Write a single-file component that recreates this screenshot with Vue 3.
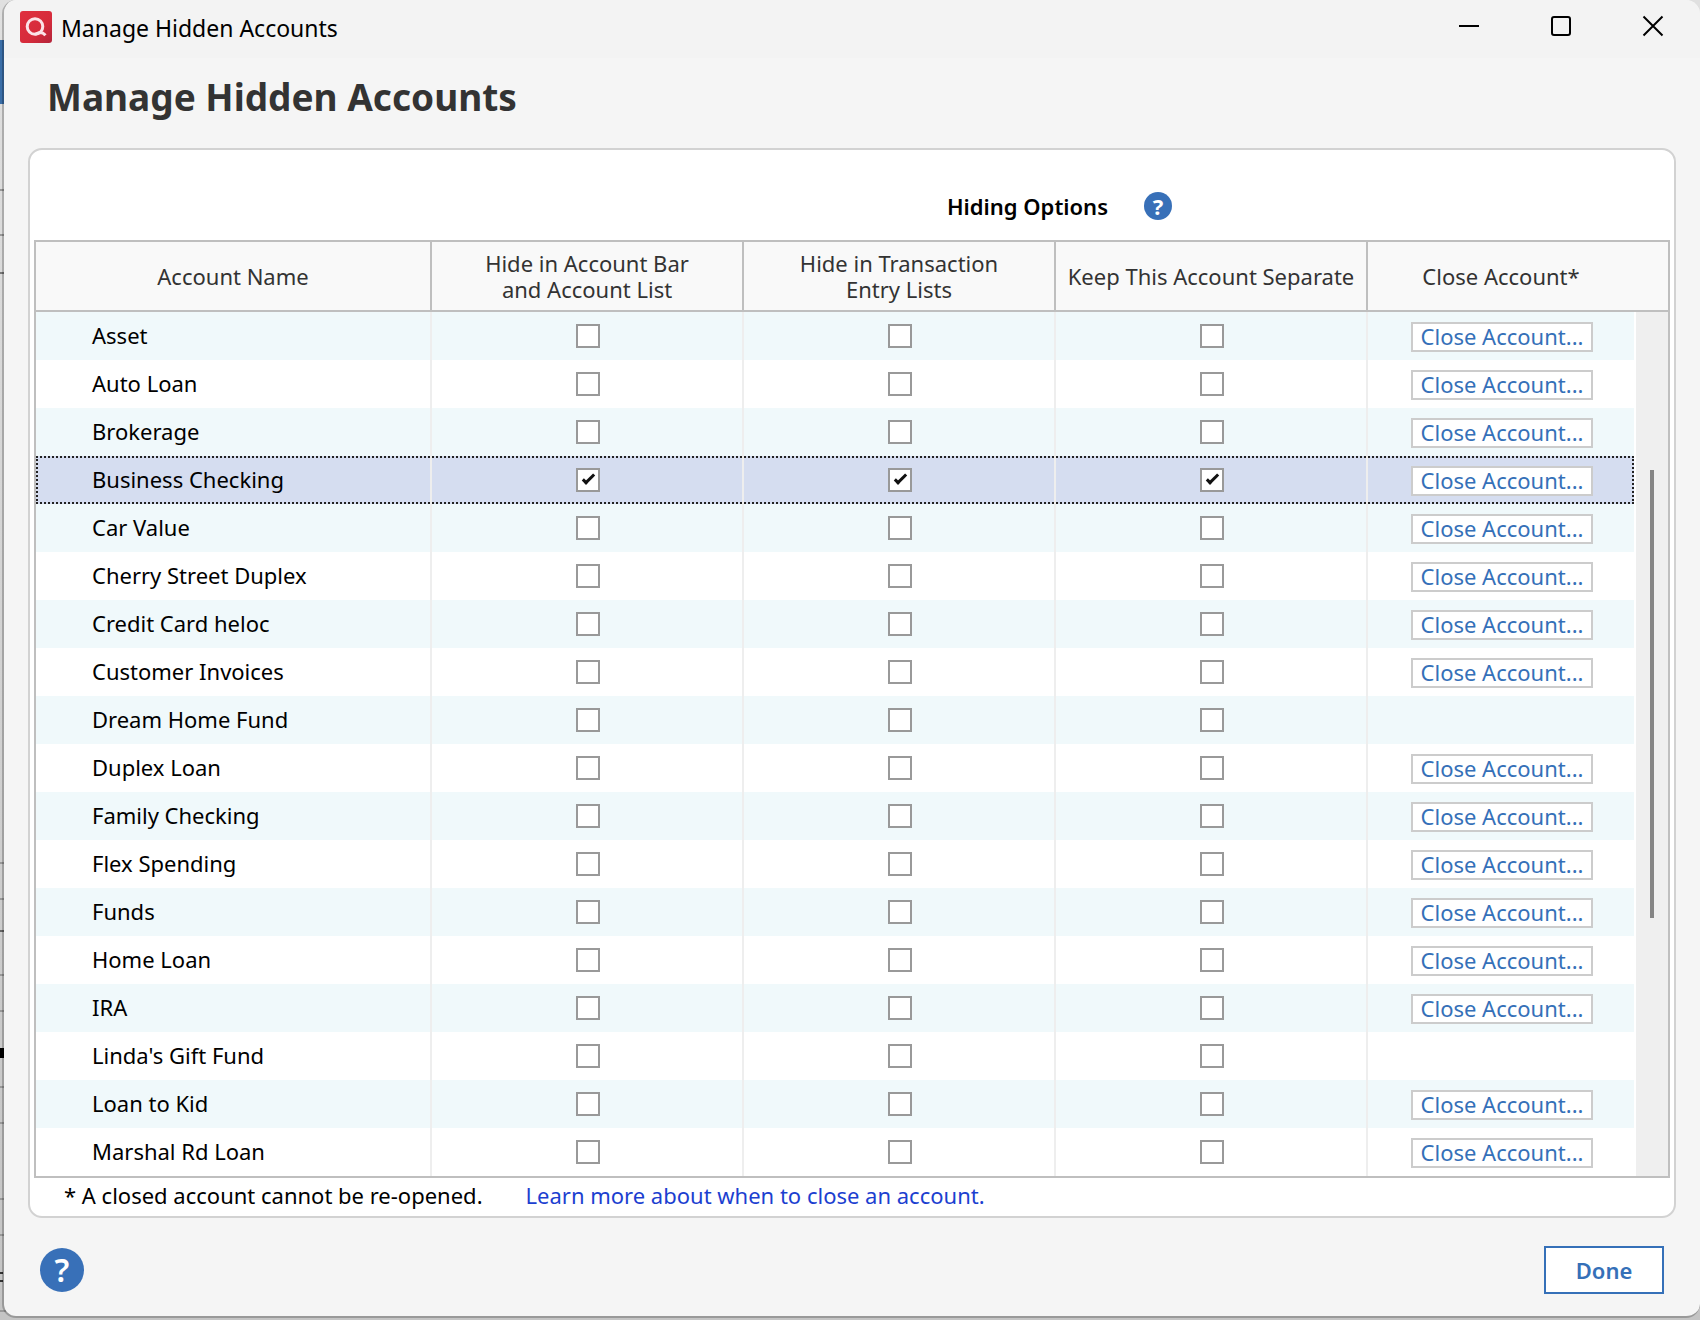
<template>
  <div class="desktop">
    <main class="window">
      <header class="title-bar">
        <svg class="logo" viewBox="0 0 32 32" aria-hidden="true">
          <defs>
            <linearGradient id="logo-red" x1="0" y1="0" x2="1" y2="1">
              <stop offset="0" stop-color="#e0303f" />
              <stop offset="0.6" stop-color="#d62b3b" />
              <stop offset="1" stop-color="#b3243a" />
            </linearGradient>
          </defs>
          <rect width="32" height="32" rx="3" fill="url(#logo-red)" />
          <circle cx="15" cy="15.500" r="7.800" fill="none" stroke="#fbe3e8" stroke-width="3" />
          <path d="M15 23.300Q18 22 20 21.500Q23 21.500 25.500 24.200" fill="none" stroke="#fbe3e8" stroke-width="3" />
        </svg>
        <span class="title-text">Manage Hidden Accounts</span>
        <div class="window-controls">
          <button class="control" aria-label="Minimize">
            <svg viewBox="0 0 20 20"><path d="M0 10h20" /></svg>
          </button>
          <button class="control" aria-label="Maximize">
            <svg viewBox="0 0 20 20"><rect x="1" y="1" width="18" height="18" rx="2" /></svg>
          </button>
          <button class="control" aria-label="Close">
            <svg viewBox="0 0 20 20"><path d="M0.500 0.500l19 19M19.500 0.500l-19 19" /></svg>
          </button>
        </div>
      </header>

      <h1 class="heading">Manage Hidden Accounts</h1>

      <section class="panel">
        <div class="options">
          <span class="options-label">Hiding Options</span>
          <button class="help-btn small" aria-label="Help with hiding options">?</button>
        </div>

        <div class="list">
          <table class="accounts">
            <colgroup>
              <col class="col-name" />
              <col v-for="option in options" :key="option.key" class="col-option" />
              <col />
            </colgroup>
            <thead>
              <tr>
                <th scope="col">Account Name</th>
                <th v-for="option in options" :key="option.key" scope="col">{{ option.label }}</th>
                <th scope="col">Close Account*</th>
              </tr>
            </thead>
            <tbody>
              <tr
                v-for="account in accounts"
                :key="account.name"
                :class="{ selected: account.name === selected }"
                @click="selected = account.name"
              >
                <td class="name">{{ account.name }}</td>
                <td v-for="option in options" :key="option.key">
                  <input
                    v-model="account[option.key]"
                    type="checkbox"
                    :aria-label="option.label + ': ' + account.name"
                  />
                </td>
                <td>
                  <button v-if="account.closable" class="close-btn">Close Account...</button>
                </td>
              </tr>
            </tbody>
          </table>
          <div class="scroll-side">
            <div class="scroll-head"></div>
            <div class="scroll-track">
              <div class="scroll-thumb"></div>
            </div>
          </div>
        </div>

        <div class="notes">
          <span>* A closed account cannot be re-opened.</span>
          <a href="#">Learn more about when to close an account.</a>
        </div>
      </section>

      <footer class="footer">
        <button class="help-btn" aria-label="Help">?</button>
        <button class="done-btn">Done</button>
      </footer>
    </main>
  </div>
</template>

<script setup>
import { ref } from 'vue';

const options = [
  { key: 'hideInBar', label: 'Hide in Account Bar and Account List' },
  { key: 'hideInEntry', label: 'Hide in Transaction Entry Lists' },
  { key: 'separate', label: 'Keep This Account Separate' }
];

const names = [
  'Asset',
  'Auto Loan',
  'Brokerage',
  'Business Checking',
  'Car Value',
  'Cherry Street Duplex',
  'Credit Card heloc',
  'Customer Invoices',
  'Dream Home Fund',
  'Duplex Loan',
  'Family Checking',
  'Flex Spending',
  'Funds',
  'Home Loan',
  'IRA',
  "Linda's Gift Fund",
  'Loan to Kid',
  'Marshal Rd Loan'
];

// Savings goals can be hidden but not closed
const goals = ['Dream Home Fund', "Linda's Gift Fund"];

const selected = ref('Business Checking');

const accounts = ref(
  names.map((name) => {
    const hidden = name === 'Business Checking';
    return {
      name,
      hideInBar: hidden,
      hideInEntry: hidden,
      separate: hidden,
      closable: !goals.includes(name)
    };
  })
);
</script>

<style>
body {
  margin: 0;
}
</style>

<style scoped>
/* The edge of the window behind shows along the left side */
.desktop {
  box-sizing: border-box;
  min-height: 100vh;
  padding: 0 0 2px 2px;
  display: flex;
  font-family: 'Noto Sans', 'Open Sans', sans-serif;
  font-size: 22px;
  color: #000;
  background:
    linear-gradient(#3a6ea8, #3a6ea8) 0 40px / 4px 64px no-repeat,
    linear-gradient(#000, #000) 0 1048px / 4px 10px no-repeat,
    linear-gradient(#999, #999) 0 189px / 4px 2px no-repeat,
    linear-gradient(#999, #999) 0 234px / 4px 2px no-repeat,
    linear-gradient(#777, #777) 0 272px / 4px 2px no-repeat,
    linear-gradient(#999, #999) 0 862px / 4px 2px no-repeat,
    linear-gradient(#999, #999) 0 898px / 4px 2px no-repeat,
    linear-gradient(#666, #666) 0 930px / 4px 2px no-repeat,
    linear-gradient(#999, #999) 0 974px / 4px 2px no-repeat,
    linear-gradient(#999, #999) 0 1010px / 4px 2px no-repeat,
    linear-gradient(#999, #999) 0 1086px / 4px 2px no-repeat,
    linear-gradient(#999, #999) 0 1122px / 4px 2px no-repeat,
    linear-gradient(#999, #999) 0 1198px / 4px 2px no-repeat,
    linear-gradient(#999, #999) 0 1234px / 4px 2px no-repeat,
    linear-gradient(#333, #333) 0 1272px / 3px 2px no-repeat,
    linear-gradient(#333, #333) 0 1280px / 3px 2px no-repeat,
    linear-gradient(#999, #999) 0 1310px / 6px 2px no-repeat,
    linear-gradient(#e0e0e0, #c4c4c4);
}

.window {
  flex: 1;
  min-width: 0;
  display: flex;
  flex-direction: column;
  background: #f5f5f5;
  background-clip: padding-box;
  border: 2px solid rgba(0, 0, 0, 0.22);
  border-top: none;
  border-right: none;
  border-radius: 14px;
  overflow: hidden;
}

.title-bar {
  display: flex;
  align-items: center;
  height: 58px;
  padding: 0 1px 0 16px;
  background: #f3f3f3;
}

.logo {
  width: 32px;
  height: 32px;
  margin-bottom: 4px;
}

.title-text {
  margin: 0 0 2px 9px;
  font-size: 23px;
}

.window-controls {
  display: flex;
  margin-left: auto;
}

.control {
  width: 92px;
  height: 52px;
  padding: 0;
  margin-bottom: 6px;
  background: none;
  border: none;
}

.control svg {
  display: block;
  width: 20px;
  height: 20px;
  margin: 0 auto;
  fill: none;
  stroke: #000;
  stroke-width: 2;
  overflow: visible;
}

.heading {
  margin: 0;
  padding: 16px 43px 0;
  height: 74px;
  line-height: 46px;
  font-size: 37px;
  font-weight: 700;
  color: #333;
}

.panel {
  margin: 0 24px;
  padding: 0 4px;
  background: #fff;
  border: 2px solid #d2d2d2;
  border-radius: 14px;
}

.options {
  display: flex;
  align-items: center;
  justify-content: flex-end;
  gap: 36px;
  height: 68px;
  padding: 22px 498px 0 0;
}

.options-label {
  font-weight: 600;
}

.list {
  display: flex;
  border: 2px solid #bfbfbf;
}

.accounts {
  flex: 1;
  min-width: 0;
  table-layout: fixed;
  border-collapse: separate;
  border-spacing: 0;
}

.col-name {
  width: 396px;
}

.col-option {
  width: 312px;
}

.accounts th {
  height: 68px;
  padding: 0 40px;
  line-height: 26px;
  font-weight: 400;
  color: #333;
  background: #f9f9f9;
  border-right: 2px solid #bfbfbf;
  border-bottom: 2px solid #bfbfbf;
}

.accounts th:nth-child(4) {
  padding: 0;
}

.accounts td {
  height: 48px;
  padding: 0 0 0 2px;
  line-height: 26px;
  text-align: center;
  border-right: 2px solid #eee;
}

.accounts th:last-child,
.accounts td:last-child {
  border-right: none;
}

.accounts .name {
  height: 46px;
  padding: 0 0 2px 56px;
  text-align: left;
}

.accounts tbody tr:nth-child(odd) {
  background: #f0f9fb;
}

.accounts tbody tr.selected {
  background: #d5ddf0;
  outline: 2px dotted #222;
  outline-offset: -2px;
}

.accounts input {
  appearance: none;
  display: block;
  width: 24px;
  height: 24px;
  margin: 0 auto;
  background: #fff;
  border: 2px solid #999;
}

.accounts input:checked::after {
  content: '';
  display: block;
  width: 13px;
  height: 6px;
  margin: 5px 0 0 4px;
  border: solid #111;
  border-width: 0 0 3px 3px;
  box-sizing: border-box;
  transform: rotate(-45deg);
}

.close-btn {
  display: block;
  height: 30px;
  margin: 2px auto 0;
  padding: 0 8px 2px;
  font: inherit;
  line-height: 24px;
  color: #3570b8;
  background: #fff;
  border: 2px solid #ccc;
}

.scroll-side {
  display: flex;
  flex-direction: column;
  width: 34px;
}

.scroll-head {
  height: 68px;
  background: #f9f9f9;
  border-bottom: 2px solid #bfbfbf;
}

.scroll-track {
  flex: 1;
  margin-left: 2px;
  padding: 158px 14px 0;
  background: #efefef;
}

.scroll-thumb {
  width: 4px;
  height: 448px;
  background: #858585;
}

.notes {
  display: flex;
  align-items: center;
  gap: 43px;
  height: 34px;
  padding: 0 0 4px 30px;
}

.notes a {
  color: #1c3fd0;
  text-decoration: none;
}

.footer {
  display: flex;
  align-items: center;
  justify-content: space-between;
  padding: 28px 36px 22px;
}

.help-btn {
  width: 44px;
  height: 44px;
  padding: 0;
  font: inherit;
  font-size: 32px;
  font-weight: 600;
  line-height: 44px;
  color: #fff;
  background: #3870b8;
  border: none;
  border-radius: 50%;
}

.help-btn.small {
  width: 28px;
  height: 28px;
  font-size: 22px;
  font-weight: 700;
  line-height: 28px;
}

.done-btn {
  width: 120px;
  height: 48px;
  padding: 0;
  font: inherit;
  font-weight: 600;
  color: #3570b8;
  background: #fff;
  border: 2px solid #3570b8;
}
</style>
